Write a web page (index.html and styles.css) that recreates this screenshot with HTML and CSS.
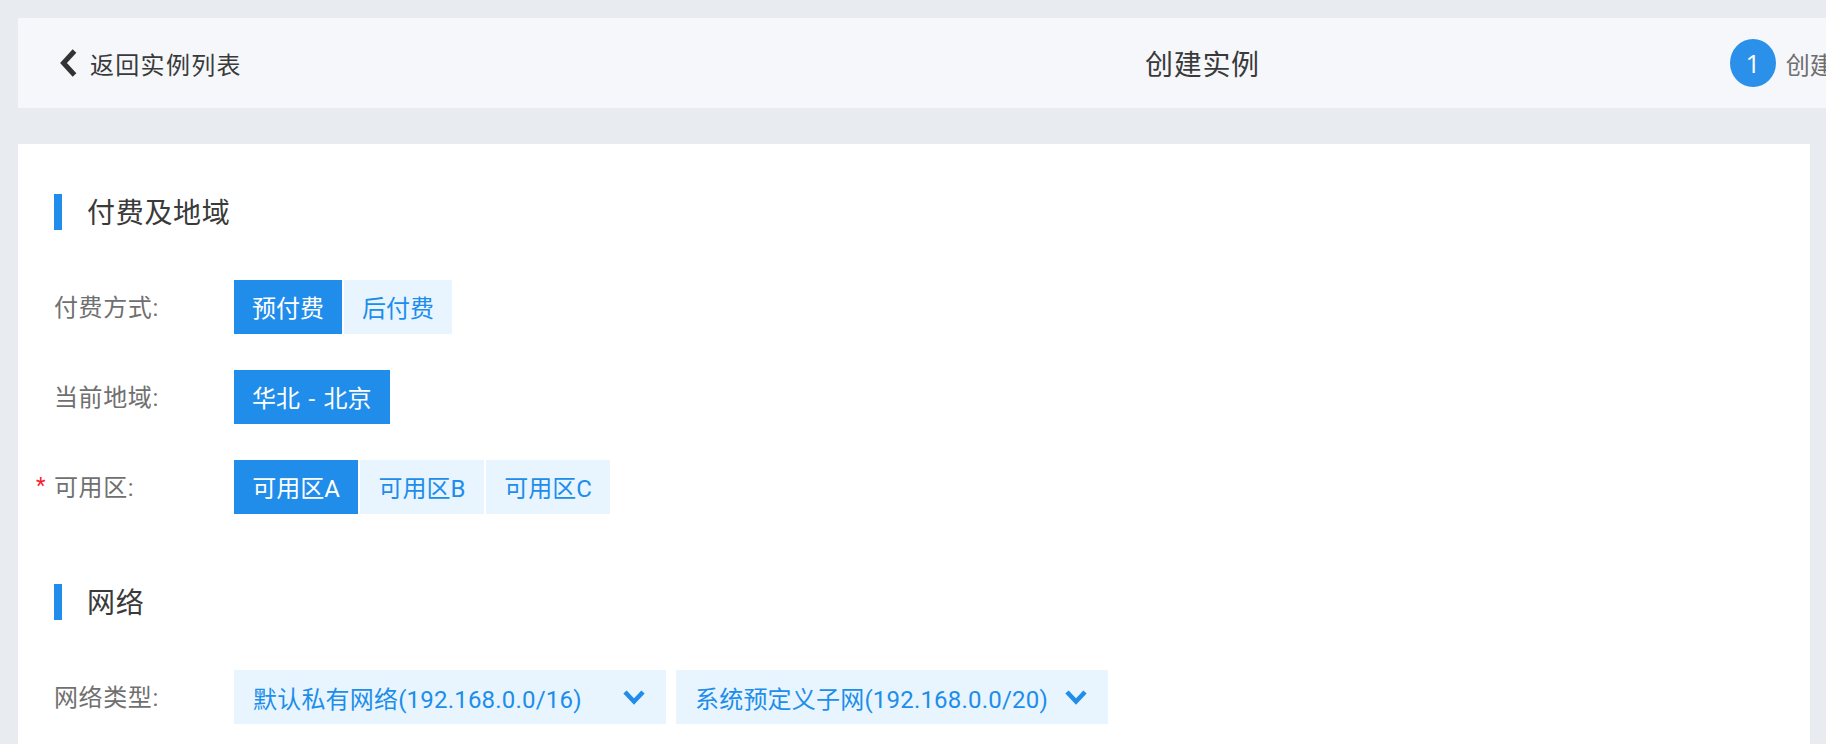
FILE: index.html
```html
<!DOCTYPE html>
<html lang="zh-CN">
<head>
<meta charset="utf-8">
<title>创建实例</title>
<link rel="stylesheet" href="styles.css">
</head>
<body>
<header class="topbar">
  <a class="back">
    <svg class="back-icon" viewBox="0 0 18 28" aria-hidden="true"><path d="M15.500 2 4.500 14l11 12" fill="none" stroke="#333" stroke-width="5"/></svg>
    <span>返回实例列表</span>
  </a>
  <h1 class="page-title">创建实例</h1>
  <div class="step"><span class="step-num">1</span><span class="step-text">创建实例</span></div>
</header>
<main class="card">
  <section class="section">
    <h2 class="section-title">付费及地域</h2>
    <div class="row">
      <div class="label">付费方式:</div>
      <div class="options">
        <button class="opt active">预付费</button>
        <button class="opt">后付费</button>
      </div>
    </div>
    <div class="row">
      <div class="label">当前地域:</div>
      <div class="options"><button class="opt active">华北 - 北京</button></div>
    </div>
    <div class="row">
      <div class="label"><span class="required">*</span>可用区:</div>
      <div class="options">
        <button class="opt opt-zone active">可用区A</button>
        <button class="opt opt-zone">可用区B</button>
        <button class="opt opt-zone">可用区C</button>
      </div>
    </div>
  </section>
  <section class="section">
    <h2 class="section-title">网络</h2>
    <div class="row">
      <div class="label">网络类型:</div>
      <div class="selects">
        <div class="select"><span>默认私有网络(192.168.0.0/16)</span>
          <svg class="caret" viewBox="0 0 22 16" aria-hidden="true"><path d="M2 3l9 9.500L20 3" fill="none" stroke="#208deb" stroke-width="4.500"/></svg></div>
        <div class="select"><span>系统预定义子网(192.168.0.0/20)</span>
          <svg class="caret" viewBox="0 0 22 16" aria-hidden="true"><path d="M2 3l9 9.500L20 3" fill="none" stroke="#208deb" stroke-width="4.500"/></svg></div>
      </div>
    </div>
  </section>
</main>
</body>
</html>
```
FILE: styles.css
```css
* { box-sizing: border-box; }
html, body { height: 100%; margin: 0; overflow: hidden; }
body {
  background: #e8ebf0;
  padding: 18px 16px 0 18px;
  font-family: Roboto, "Noto Sans CJK SC", sans-serif;
  color: #333;
}
.topbar {
  display: flex;
  align-items: center;
  height: 90px;
  margin-right: -16px;
  padding-left: 41px;
  background: #f5f7fb;
  overflow: hidden;
  white-space: nowrap;
}
.back { display: flex; align-items: center; gap: 13px; font-size: 24px; letter-spacing: 1.300px; color: #3a3a3a; width: 182px; flex: none; }
.back-icon { width: 18px; height: 28px; flex: none; }
.page-title { margin: 0 0 0 904px; font-size: 28px; font-weight: 400; letter-spacing: .7px; color: #3a3a3a; flex: none; }
.step { display: flex; align-items: center; gap: 10px; margin-left: 470px; flex: none; }
.step-num {
  display: flex; align-items: center; justify-content: center;
  width: 46px; height: 48px; border-radius: 50%;
  background: #2a90e9; color: #fff; font-size: 26px; font-family: "Open Sans", sans-serif;
}
.step-text { font-size: 24px; color: #6e6e6e; }
.card {
  margin-top: 36px;
  padding: 50px 36px 60px;
  background: #fff;
  height: 800px;
}
.section + .section { margin-top: 70px; }
.section-title {
  margin: 0 0 50px;
  height: 36px;
  line-height: 39px;
  padding-left: 25px;
  border-left: 8px solid #208deb;
  font-size: 28px;
  font-weight: 400;
  letter-spacing: .7px;
  color: #3a3a3a;
}
.row { display: flex; align-items: center; height: 54px; }
.row + .row { margin-top: 36px; }
.label { width: 180px; flex: none; padding-bottom: 4px; font-size: 24px; letter-spacing: .6px; color: #707070; }
.required { display: inline-block; width: 18px; margin-left: -18px; color: #f5222d; font-size: 22px; vertical-align: 3px; }
.options { display: flex; gap: 2px; }
.opt {
  height: 54px;
  padding: 0 18px 2px;
  border: 0;
  background: #e8f5fe;
  color: #208deb;
  font: inherit;
  font-size: 24px;
  word-spacing: 2.500px;
}
.opt.active { background: #208deb; color: #fff; }
.opt-zone { width: 124px; padding-left: 0; padding-right: 0; }
.selects { display: flex; gap: 10px; }
.select {
  display: flex;
  align-items: center;
  justify-content: space-between;
  width: 432px;
  height: 54px;
  padding: 0 21px 0 19px;
  background: #e8f5fe;
  color: #208deb;
  font-size: 24px;
  letter-spacing: .2px;
  white-space: nowrap;
}
.caret { width: 22px; height: 16px; flex: none; }
```
